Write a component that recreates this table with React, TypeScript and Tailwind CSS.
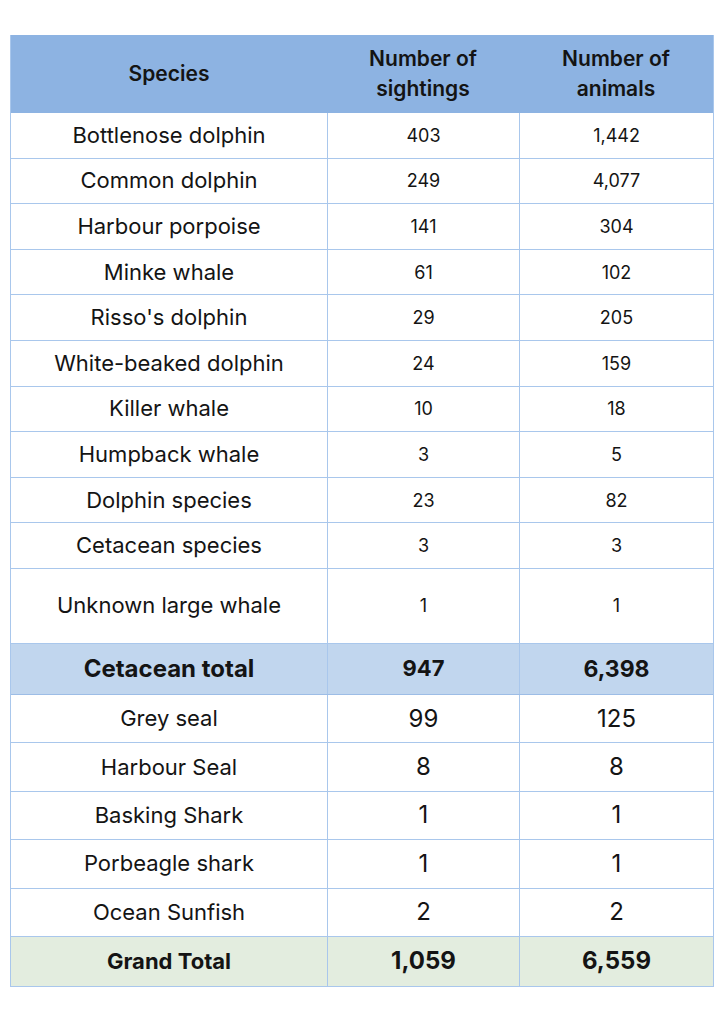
import React from "react";

type Row = { name: string; a: string; b: string };

const top: Row[] = [
  { name: "Bottlenose dolphin", a: "403", b: "1,442" },
  { name: "Common dolphin", a: "249", b: "4,077" },
  { name: "Harbour porpoise", a: "141", b: "304" },
  { name: "Minke whale", a: "61", b: "102" },
  { name: "Risso's dolphin", a: "29", b: "205" },
  { name: "White-beaked dolphin", a: "24", b: "159" },
  { name: "Killer whale", a: "10", b: "18" },
  { name: "Humpback whale", a: "3", b: "5" },
  { name: "Dolphin species", a: "23", b: "82" },
  { name: "Cetacean species", a: "3", b: "3" },
];

const bottom: Row[] = [
  { name: "Grey seal", a: "99", b: "125" },
  { name: "Harbour Seal", a: "8", b: "8" },
  { name: "Basking Shark", a: "1", b: "1" },
  { name: "Porbeagle shark", a: "1", b: "1" },
  { name: "Ocean Sunfish", a: "2", b: "2" },
];

export default function App() {
  return (
    <div
      className="min-h-[1024px] w-[724px] bg-white pt-[35px] pl-[10px] text-[#141414]"
      style={{ fontFamily: "Inter, Lato, sans-serif" }}
    >
      <div className="w-[704px] border-x border-[#a9c7ec]">
        {/* header */}
        <div className="flex h-[78px] bg-[#8db3e2] font-semibold text-[21px] leading-[30px]">
          <div className="flex w-[316px] items-center justify-center">Species</div>
          <div className="flex w-[192px] items-center justify-center text-center">
            Number of
            <br />
            sightings
          </div>
          <div className="flex flex-1 items-center justify-center text-center">
            Number of
            <br />
            animals
          </div>
        </div>
        {top.map((r) => (
          <div key={r.name} className="flex h-[45.6px] border-b border-[#a9c7ec]">
            <div className="flex w-[316px] items-center justify-center text-[22px]">{r.name}</div>
            <div className="flex w-[192px] items-center justify-center border-l border-[#a9c7ec] text-[18px]">
              {r.a}
            </div>
            <div className="flex flex-1 items-center justify-center border-l border-[#a9c7ec] text-[18px]">
              {r.b}
            </div>
          </div>
        ))}
        <div className="flex h-[75px] border-b border-[#a9c7ec]">
          <div className="flex w-[316px] items-center justify-center text-[22px]">Unknown large whale</div>
          <div className="flex w-[192px] items-center justify-center border-l border-[#a9c7ec] text-[18px]">1</div>
          <div className="flex flex-1 items-center justify-center border-l border-[#a9c7ec] text-[18px]">1</div>
        </div>
        <div className="flex h-[51px] border-b border-[#9dbde6] bg-[#c1d6ee] font-bold">
          <div className="flex w-[316px] items-center justify-center text-[24px]">Cetacean total</div>
          <div className="flex w-[192px] items-center justify-center border-l border-[#a9c7ec] text-[22px]">
            947
          </div>
          <div className="flex flex-1 items-center justify-center border-l border-[#a9c7ec] text-[23px]">
            6,398
          </div>
        </div>
        {bottom.map((r) => (
          <div key={r.name} className="flex h-[48.4px] border-b border-[#a9c7ec]">
            <div className="flex w-[316px] items-center justify-center text-[22px]">{r.name}</div>
            <div className="flex w-[192px] items-center justify-center border-l border-[#a9c7ec] text-[24px]">
              {r.a}
            </div>
            <div className="flex flex-1 items-center justify-center border-l border-[#a9c7ec] text-[24px]">
              {r.b}
            </div>
          </div>
        ))}
        <div className="flex h-[50px] border-b border-[#a9c7ec] bg-[#e3eddf] font-bold">
          <div className="flex w-[316px] items-center justify-center text-[22px]">Grand Total</div>
          <div className="flex w-[192px] items-center justify-center border-l border-[#a9c7ec] text-[24px]">
            1,059
          </div>
          <div className="flex flex-1 items-center justify-center border-l border-[#a9c7ec] text-[24px]">
            6,559
          </div>
        </div>
      </div>
    </div>
  );
}
